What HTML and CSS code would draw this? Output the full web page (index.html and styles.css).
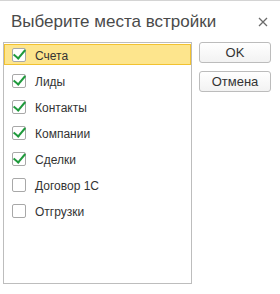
FILE: index.html
```html
<!DOCTYPE html>
<html>
<head>
    <title>Выберите места встройки</title>
    <link rel="stylesheet" href="styles.css">
</head>
<body>
    <div class="dialog">
        <div class="header">
            <span class="title">Выберите места встройки</span>
            <span class="close">
                <svg width="10" height="10" viewBox="0 0 10 10">
                    <path d="M1 1 L9 9 M9 1 L1 9" stroke="#6b6b6b" stroke-width="1.3" fill="none"/>
                </svg>
            </span>
        </div>
        <div class="content">
            <div class="list">
                <div class="row selected"><span class="box checked"></span><span class="label">Счета</span></div>
                <div class="row"><span class="box checked"></span><span class="label">Лиды</span></div>
                <div class="row"><span class="box checked"></span><span class="label">Контакты</span></div>
                <div class="row"><span class="box checked"></span><span class="label">Компании</span></div>
                <div class="row"><span class="box checked"></span><span class="label">Сделки</span></div>
                <div class="row"><span class="box"></span><span class="label">Договор 1С</span></div>
                <div class="row"><span class="box"></span><span class="label">Отгрузки</span></div>
            </div>
            <div class="buttons">
                <button class="btn">OK</button>
                <button class="btn">Отмена</button>
            </div>
        </div>
    </div>
</body>
</html>
```

FILE: styles.css
```css
body {
    margin: 0;
    font-family: "Liberation Sans", Arial, sans-serif;
    background: #fff;
    color: #333;
}

.dialog {
    width: 280px;
    height: 293px;
    border-top: 1px solid #d4d4d4;
}

.header {
    display: flex;
    justify-content: space-between;
    align-items: center;
    height: 41px;
    padding: 0 12px 0 11px;
}

.title {
    font-size: 17px;
    color: #4a4a4a;
    margin-top: 1px;
}

.close {
    display: flex;
    margin-top: 1px;
}

.content {
    display: flex;
    padding-left: 3px;
}

.list {
    width: 187px;
    height: 239px;
    border: 1px solid #bdbdbd;
    padding-top: 1px;
    box-sizing: content-box;
}

.row {
    display: flex;
    align-items: center;
    height: 21px;
    margin-bottom: 5px;
    padding-left: 8px;
    box-sizing: border-box;
    font-size: 12px;
}

.row.selected {
    background: #fde58d;
    border: 1px solid #f2c230;
    padding-left: 7px;
}

.box {
    width: 12px;
    height: 12px;
    border: 1px solid #a8a8a8;
    border-radius: 2px;
    background: #fff;
    margin-right: 9px;
    position: relative;
    margin-top: 1px;
}

.box.checked::after {
    content: "";
    position: absolute;
    left: 3px;
    top: -2px;
    width: 5px;
    height: 10px;
    border-right: 2.5px solid #1f9a3c;
    border-bottom: 2.5px solid #1f9a3c;
    transform: rotate(40deg);
}

.label {
    color: #333;
    margin-top: 2px;
}

.buttons {
    display: flex;
    flex-direction: column;
    gap: 8px;
    margin-left: 7px;
}

.btn {
    width: 72px;
    height: 21px;
    border: 1px solid #bcbcbc;
    border-radius: 3px;
    background: linear-gradient(#ffffff, #f2f2f2);
    font-family: "Liberation Sans", Arial, sans-serif;
    font-size: 13px;
    color: #333;
    padding: 0;
}
```
